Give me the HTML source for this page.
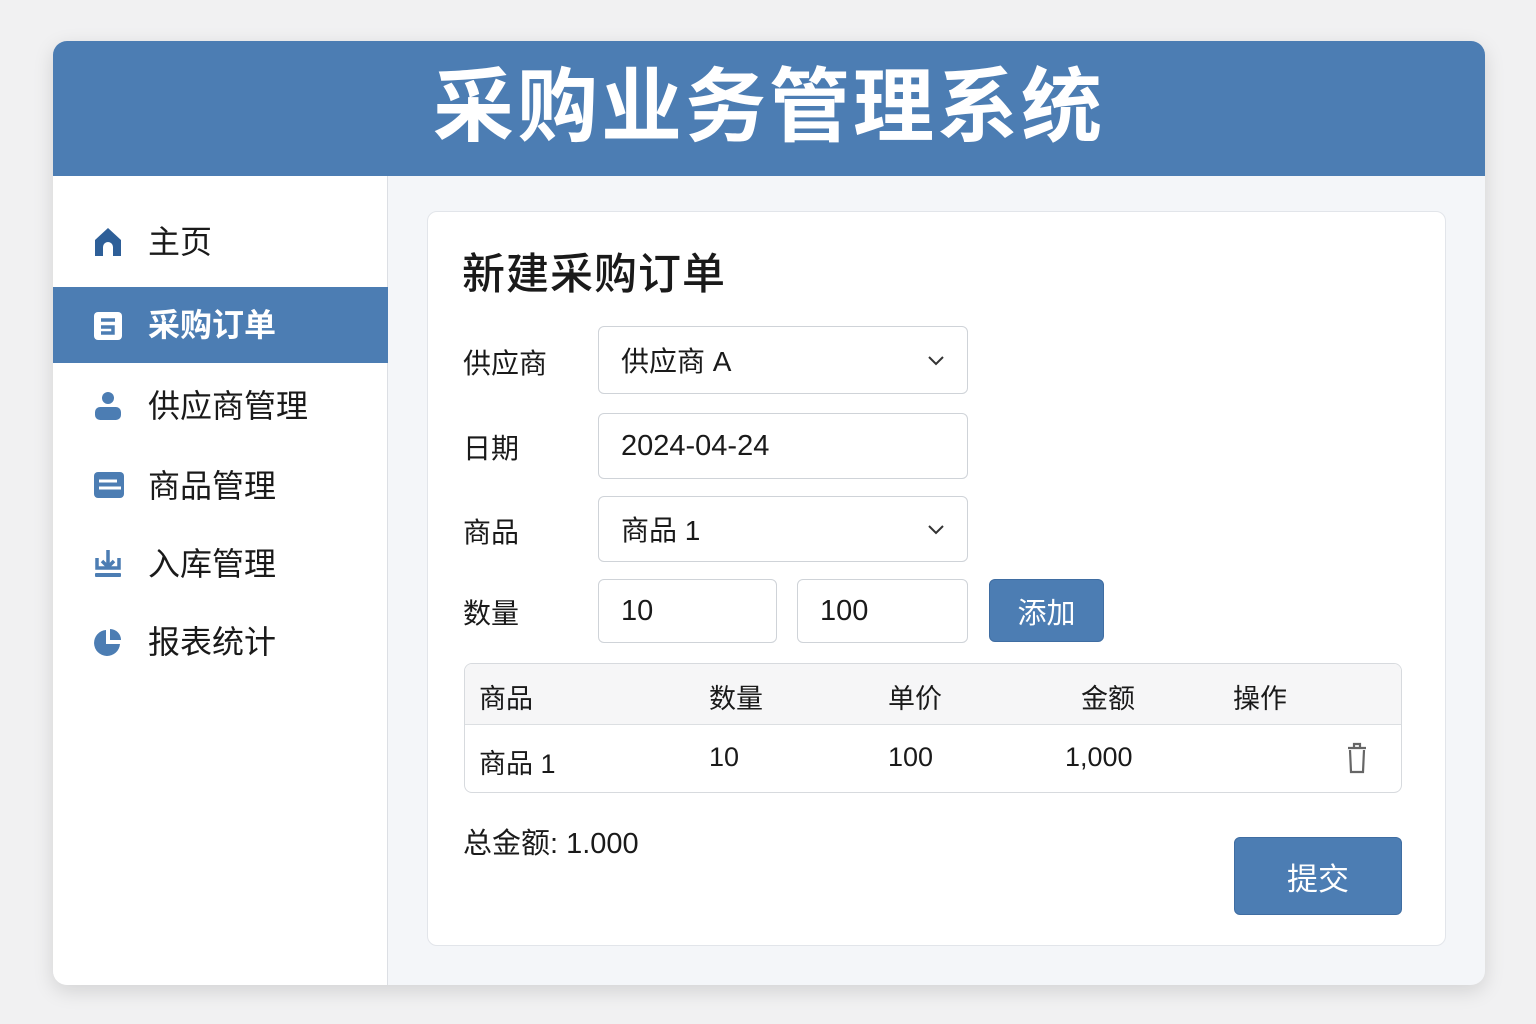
<!DOCTYPE html>
<html><head><meta charset="utf-8"><style>
*{margin:0;padding:0;box-sizing:border-box}
body{width:1536px;height:1024px;background:#f1f1f2;font-family:"Liberation Sans","Noto Sans CJK SC",sans-serif;color:#1a1a1a;position:relative;overflow:hidden}
.app{position:absolute;left:53px;top:41px;width:1432px;height:944px;border-radius:14px;overflow:hidden;background:#f4f6f9;box-shadow:0 6px 20px rgba(0,0,0,.13)}
.hd{position:absolute;left:0;top:0;width:1432px;height:135px;background:#4c7db3;color:#fff;font-size:81px;font-weight:bold;text-align:center;line-height:135px;letter-spacing:3px}
.sb{position:absolute;left:0;top:135px;width:335px;height:809px;background:#fff;border-right:1px solid #dcdfe4}
.it{position:absolute;left:0;width:335px;height:76px;font-size:32px;line-height:76px;padding-left:95px}
.it svg{position:absolute;left:40px;top:22px}
.act{background:#4c7db3;color:#fff;font-weight:bold}
.card{position:absolute;left:427px;top:211px;width:1019px;height:735px;background:#fff;border:1px solid #e2e5ea;border-radius:10px}
.ab{position:absolute}
.lbl{position:absolute;left:463px;font-size:28px}
.in{position:absolute;border:1.5px solid #cfd3d8;border-radius:6px;background:#fff;font-size:29px;padding-left:22px;display:flex;align-items:center}
.btn{position:absolute;background:#4c7db3;color:#fff;border-radius:6px;display:flex;align-items:center;justify-content:center;border:1px solid #3f6da2}
.tbl{position:absolute;left:464px;top:663px;width:938px;height:130px;border:1.5px solid #d7dade;border-radius:8px;overflow:hidden}
.th{position:absolute;left:0;top:0;width:100%;height:61px;background:#f6f6f7;border-bottom:1.5px solid #dcdfe2}
.c{position:absolute;font-size:27px}
</style></head><body>
<div class="app">
<div class="hd">采购业务管理系统</div>
<div class="sb">
<div class="it" style="top:28px">主页<svg width="30" height="32" viewBox="0 0 30 32"><path d="M2 14 L15 2 L28 14 V30 H20 V21 A5 5 0 0 0 10 21 V30 H2 Z" fill="#2e5f98"/></svg></div>
<div class="it act" style="top:111px">采购订单<svg width="30" height="32" viewBox="0 0 30 32"><rect x="1" y="3" width="28" height="28" rx="4" fill="#fff"/><path d="M8 11 H22 M8 18 H20 V24 H8" stroke="#4c7db3" stroke-width="3.5" fill="none"/></svg></div>
<div class="it" style="top:192px">供应商管理<svg width="30" height="32" viewBox="0 0 30 32"><circle cx="15" cy="8" r="6" fill="#4c7db3"/><rect x="2" y="17" width="26" height="13" rx="5" fill="#4c7db3"/></svg></div>
<div class="it" style="top:272px">商品管理<svg width="32" height="32" viewBox="0 0 32 32"><rect x="1" y="2" width="30" height="26" rx="4" fill="#4c7db3"/><path d="M6 11 H24 M6 18 H28" stroke="#fff" stroke-width="3"/></svg></div>
<div class="it" style="top:350px">入库管理<svg width="30" height="32" viewBox="0 0 30 32"><path d="M15 2 V18 M9 13 L15 19 L21 13 M4 10 V20 H26 V10" stroke="#4c7db3" stroke-width="3.5" fill="none"/><rect x="2" y="25" width="26" height="4" rx="1" fill="#4c7db3"/></svg></div>
<div class="it" style="top:428px">报表统计<svg width="30" height="32" viewBox="0 0 30 32"><path d="M13 4 A13 13 0 1 0 27 18 H13 Z" fill="#4c7db3"/><path d="M17 3 A11 11 0 0 1 28 14 H17 Z" fill="#4c7db3"/></svg></div>
</div>
</div>
<div class="card"></div>
<div class="ab" style="left:462px;top:240px;font-size:43px;font-weight:500;letter-spacing:1px">新建采购订单</div>
<div class="lbl" style="top:342px">供应商</div>
<div class="lbl" style="top:427px">日期</div>
<div class="lbl" style="top:511px">商品</div>
<div class="lbl" style="top:592px">数量</div>
<div class="in" style="left:598px;top:326px;width:370px;height:68px;font-size:28px">供应商 A<svg style="position:absolute;right:22px;top:28px" width="18" height="12"><path d="M2 2 L9 9 L16 2" stroke="#333" stroke-width="2" fill="none"/></svg></div>
<div class="in" style="left:598px;top:413px;width:370px;height:66px">2024-04-24</div>
<div class="in" style="left:598px;top:496px;width:370px;height:66px;font-size:28px">商品 1<svg style="position:absolute;right:22px;top:27px" width="18" height="12"><path d="M2 2 L9 9 L16 2" stroke="#333" stroke-width="2" fill="none"/></svg></div>
<div class="in" style="left:598px;top:579px;width:179px;height:64px">10</div>
<div class="in" style="left:797px;top:579px;width:171px;height:64px">100</div>
<div class="btn" style="left:989px;top:579px;width:115px;height:63px;font-size:29px">添加</div>
<div class="tbl"><div class="th"></div>
<div class="c" style="left:14px;top:13px">商品</div>
<div class="c" style="left:244px;top:13px">数量</div>
<div class="c" style="left:423px;top:13px">单价</div>
<div class="c" style="left:616px;top:13px">金额</div>
<div class="c" style="left:768px;top:13px">操作</div>
<div class="c" style="left:14px;top:78px">商品 1</div>
<div class="c" style="left:244px;top:78px">10</div>
<div class="c" style="left:423px;top:78px">100</div>
<div class="c" style="left:600px;top:78px">1,000</div>
<svg style="position:absolute;left:880px;top:78px" width="24" height="32" viewBox="0 0 24 32"><path d="M3 6 H21 M9 6 V2 H15 V6 M5 8 L6 30 H18 L19 8" stroke="#666" stroke-width="2.2" fill="none"/></svg>
</div>
<div class="ab" style="left:463px;top:820px;font-size:29px">总金额: 1.000</div>
<div class="btn" style="left:1234px;top:837px;width:168px;height:78px;font-size:31px">提交</div>
</body></html>
